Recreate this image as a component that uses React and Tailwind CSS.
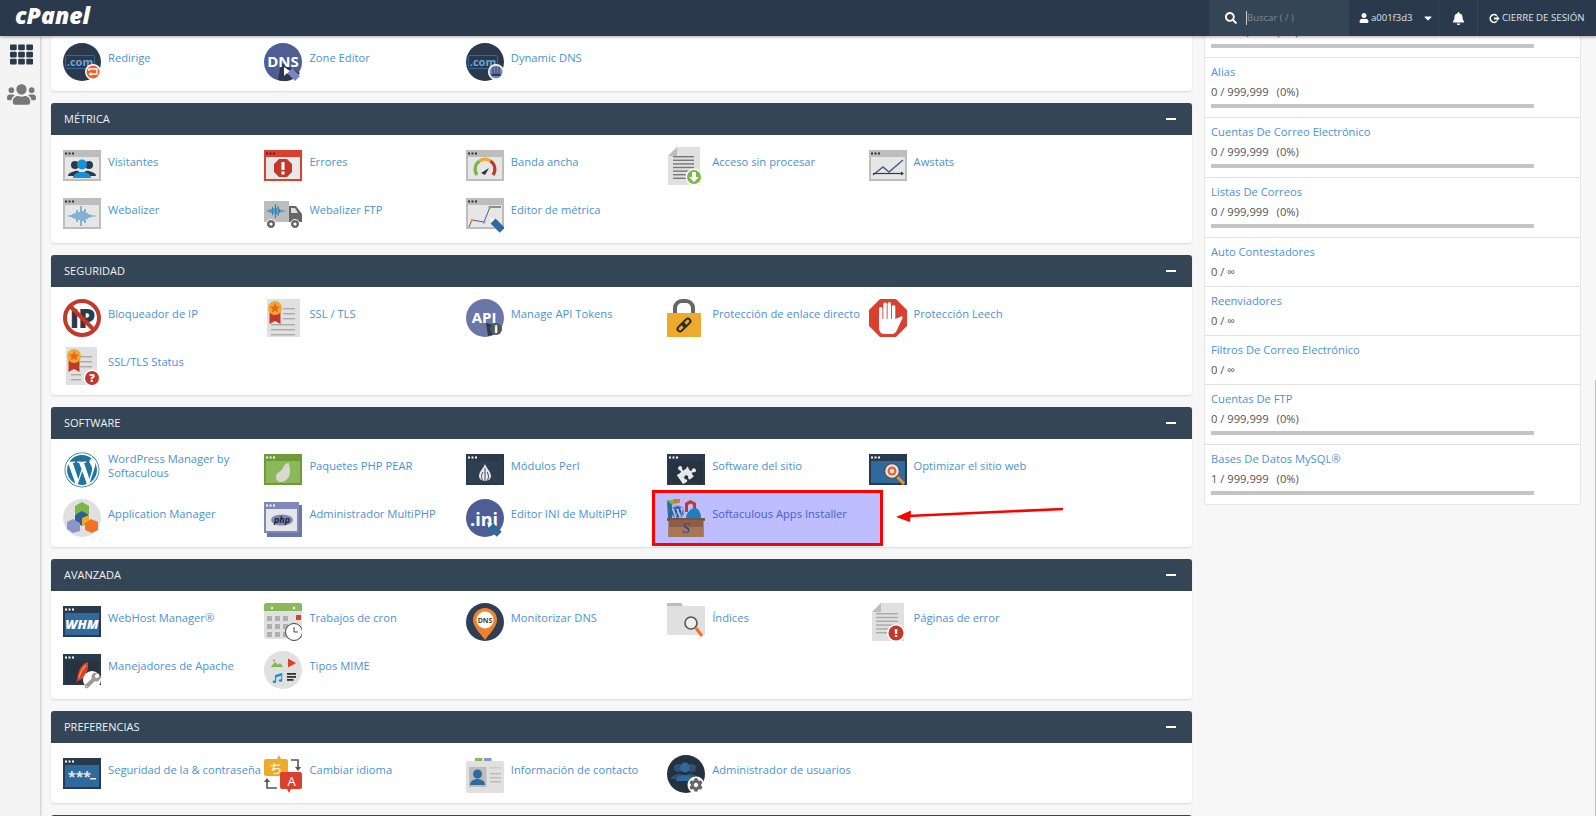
import {
  FaTh, FaUsers, FaSearch, FaUser, FaBell, FaCaretDown, FaWordpress, FaPuzzlePiece, FaCog, FaWrench, FaMusic,
} from 'react-icons/fa';

const NAVY = '#2a3a4c';
const BLUE = '#2f6a9e';

function Svg({ children }) {
  return (
    <svg viewBox="0 0 38 38" width="38" height="38" className="block shrink-0" fontFamily="'Open Sans', sans-serif">
      {children}
    </svg>
  );
}

// browser window frame used by most of the cPanel icons
function Win({ frame = '#bdbdbd', inner = '#e6e6e6', dots = '#333', children }) {
  return (
    <Svg>
      <rect y="3" width="38" height="31" fill={frame} />
      <rect x="2" y="10" width="34" height="22" fill={inner} />
      <rect x="2" y="5.5" width="2" height="2" fill={dots} />
      <rect x="5.5" y="5.5" width="2" height="2" fill={dots} />
      <rect x="9" y="5.5" width="2" height="2" fill={dots} />
      {children}
    </Svg>
  );
}

function Doc({ x = 3, w = 33, fold = false, children }) {
  const d = fold
    ? `M${x + 9} 0H${x + w}V38H${x}V9Z`
    : `M${x} 0H${x + w}V38H${x}Z`;
  return (
    <Svg>
      <path d={d} fill="#e0e0e0" />
      {fold && <path d={`M${x + 9} 0V9H${x}Z`} fill="#bdbdbd" />}
      {children}
    </Svg>
  );
}

function DotCom({ badge, children }) {
  return (
    <Svg>
      <circle cx="19" cy="19" r="19" fill={NAVY} />
      <rect x="2.5" y="12.5" width="29" height="13" rx="1" fill="none" stroke={BLUE} />
      <text x="17" y="23" textAnchor="middle" fontSize="11" fontWeight="700" fill="#6ea6d4">.com</text>
      <circle cx="30" cy="29" r="8" fill="#fff" />
      <circle cx="30" cy="29" r="6.5" fill={badge} />
      {children}
    </Svg>
  );
}

function Pencil({ x, y, color = '#7a86c0' }) {
  return (
    <g transform={`translate(${x} ${y}) rotate(-45)`}>
      <path d="M-2.5 -7L0 -11L2.5 -7Z" fill="#fff" />
      <rect x="-3.5" y="-7" width="7" height="13" fill={color} />
    </g>
  );
}

const Wave = ({ x = 0, y = 21, k = 1, color = '#1d7fc1' }) => (
  <g stroke={color} strokeWidth="1" transform={`translate(${x} ${y})`}>
    {[0.6, 1, 2, 3, 6, 4, 10, 5, 7, 3, 2, 1, 0.6, 0.5].map((h, i) => (
      <line key={i} x1={i * 2 * k} x2={i * 2 * k} y1={-h * k} y2={h * k} />
    ))}
  </g>
);

const Sheet = ({ x, y, w, n, gap = 4, color = '#999' }) => (
  <g fill={color}>
    {Array.from({ length: n }).map((_, i) => (
      <rect key={i} x={x} y={y + i * gap} width={w} height="1.4" />
    ))}
  </g>
);

const Ribbon = ({ x = 10, y = 9 }) => (
  <g>
    <path d={`M${x - 5.5} ${y}H${x + 5.5}V${y + 16}L${x} ${y + 13}L${x - 5.5} ${y + 16}Z`} fill="#c0392b" />
    <circle cx={x} cy={y} r="7" fill="#eeaa2d" />
    <path d={`M${x} ${y - 5}l1.5 3.4 3.6 .3-2.8 2.3 .9 3.6-3.2-2-3.2 2 .9-3.6-2.8-2.3 3.6-.3Z`} fill="#e8602c" />
  </g>
);

const People = ({ cx = 19, y = 13, color = '#1d8fd8', side = NAVY }) => (
  <g>
    <g fill={side}>
      <circle cx={cx - 7} cy={y + 4} r="4" />
      <path d={`M${cx - 14} ${y + 15}c0-3 4-4 7-5s7 2 7 5Z`} />
      <circle cx={cx + 7} cy={y + 4} r="4" />
      <path d={`M${cx} ${y + 15}c0-3 4-6 7-5s7 2 7 5Z`} />
    </g>
    <g fill={color}>
      <circle cx={cx} cy={y + 3.5} r="5" />
      <path d={`M${cx - 9} ${y + 17}c0-4 5-6 9-6s9 2 9 6Z`} />
    </g>
  </g>
);

const Badge = ({ cx = 29, cy = 30, r = 7, fill, mark }) => (
  <g>
    <circle cx={cx} cy={cy} r={r + 1.5} fill="#fff" />
    <circle cx={cx} cy={cy} r={r} fill={fill} />
    <text x={cx} y={cy + 4} textAnchor="middle" fontSize="11" fontWeight="800" fill="#fff">{mark}</text>
  </g>
);

const icons = {
  redirige: (
    <DotCom badge="#f1602a">
      <path d="M26 28v-2h8v5h-7" stroke="#fff" strokeWidth="1.4" fill="none" />
      <path d="M28.5 29l-3 2 3 2Z" fill="#fff" />
    </DotCom>
  ),
  zone: (
    <Svg>
      <circle cx="19" cy="19" r="19" fill="#4e5d94" />
      <path d="M17 20L36 30A19 19 0 0 1 14 37Z" fill={NAVY} />
      <text x="19" y="24" textAnchor="middle" fontSize="15" fontWeight="700" fill="#fff">DNS</text>
      <path d="M20 24l0 9 2.5-2.5 7-0Z" fill="#fff" />
      <g transform="translate(30 32) rotate(-45)">
        <rect x="-3.5" y="-6" width="7" height="11" fill="#7a86c0" />
      </g>
    </Svg>
  ),
  dyn: (
    <DotCom badge="#7a86c0">
      <path d="M27 24v6M30 24v6M33 24v6" stroke={NAVY} strokeWidth="1" />
      <rect x="25.5" y="30.5" width="9" height="2.4" fill={NAVY} />
    </DotCom>
  ),
  visitantes: <Win><People y={14} /></Win>,
  errores: (
    <Win frame="#d9402f" dots="#333" inner="#e8e8e8">
      <path d="M15 13h8l5 5v8l-5 5h-8l-5-5v-8Z" transform="translate(0 -1)" fill="#c0392b" />
      <rect x="17.5" y="15" width="3" height="8" fill="#fff" />
      <rect x="17.5" y="24.5" width="3" height="3" fill="#fff" />
    </Win>
  ),
  banda: (
    <Win>
      <path d="M11 28A10 10 0 0 1 13.5 14" fill="none" stroke="#7ab648" strokeWidth="3.2" />
      <path d="M13.5 14A10 10 0 0 1 24.5 14" fill="none" stroke="#eeaa2d" strokeWidth="3.2" />
      <path d="M24.5 14A10 10 0 0 1 27 28" fill="none" stroke="#c0392b" strokeWidth="3.2" />
      <path d="M15 26l8-5-4 7Z" fill="#333" />
    </Win>
  ),
  acceso: (
    <Doc x={1} w={32} fold>
      <Sheet x={6} y={9} w={21} n={7} color="#777" gap={3.6} />
      <circle cx="27" cy="30" r="8.5" fill="#fff" />
      <circle cx="27" cy="30" r="7" fill="#7ab648" />
      <path d="M25 25h4v5h3l-5 5-5-5h3Z" fill="#fff" />
    </Doc>
  ),
  awstats: (
    <Win>
      <path d="M4 28l10-8 6 5 14-12" fill="none" stroke="#4e5d94" strokeWidth="1.6" />
      <path d="M4 26.5H34" stroke={NAVY} strokeWidth="1.2" />
      <path d="M32 24.5l3 2-3 2Z" fill={NAVY} />
    </Win>
  ),
  webalizer: <Win><Wave x={6} y={21} /></Win>,
  webftp: (
    <Svg>
      <rect y="6" width="25" height="21" fill="#bdbdbd" />
      <path d="M25 11h7l6 8v8H25Z" fill="#666" />
      <path d="M27 13h4l3 5h-7Z" fill="#ddd" />
      <Wave x={3} y={16} k={0.7} />
      <circle cx="7" cy="29" r="4.5" fill="#666" stroke="#fff" />
      <circle cx="7" cy="29" r="1.6" fill="#fff" />
      <circle cx="31" cy="29" r="4.5" fill="#666" stroke="#fff" />
      <circle cx="31" cy="29" r="1.6" fill="#fff" />
    </Svg>
  ),
  editor: (
    <Win>
      <path d="M3 32L6 25L18 27L24 12" fill="none" stroke="#4e5d94" strokeWidth="1" />
      <path d="M25 12H35" stroke="#666" strokeWidth="1.4" />
      <circle cx="6" cy="25" r="1.6" fill="#eeaa2d" />
      <circle cx="18" cy="27" r="1.6" fill="#8d94c8" />
      <circle cx="24" cy="12" r="1.6" fill="#7ab648" />
      <Pencil x={32} y={31} color={BLUE} />
    </Win>
  ),
  ip: (
    <Svg>
      <circle cx="19" cy="19" r="17" fill="#fff" stroke="#c0392b" strokeWidth="4" />
      <text x="19" y="29" textAnchor="middle" fontSize="27" fontWeight="800" fill={NAVY} letterSpacing="-1">IP</text>
      <path d="M7 7L31 31" stroke="#c0392b" strokeWidth="4" />
    </Svg>
  ),
  ssl: (
    <Doc>
      <Sheet x={19} y={9} w={12} n={3} gap={5} color="#aaa" />
      <Sheet x={7} y={25} w={24} n={3} gap={5} color="#aaa" />
      <Ribbon x={11} y={9} />
    </Doc>
  ),
  sslstatus: (
    <Doc x={3} w={31}>
      <Sheet x={17} y={9} w={12} n={3} gap={5} color="#aaa" />
      <Sheet x={8} y={27} w={10} n={2} gap={5} color="#aaa" />
      <Ribbon x={11} y={9} />
      <Badge cx={29} cy={31} r={7} fill="#c0392b" mark="?" />
    </Doc>
  ),
  api: (
    <Svg>
      <circle cx="19" cy="19" r="19" fill="#6b76a8" />
      <path d="M20 24L36 28A19 19 0 0 1 22 37Z" fill={NAVY} />
      <text x="18" y="24" textAnchor="middle" fontSize="15" fontWeight="700" fill="#fff">API</text>
      <circle cx="30" cy="30" r="6" fill="#555" />
      <text x="30" y="34" textAnchor="middle" fontSize="11" fontWeight="800" fill="#fff">i</text>
    </Svg>
  ),
  lock: (
    <Svg>
      <path d="M8 16V9a7 7 0 0 1 7-7h4a7 7 0 0 1 7 7v7" fill="none" stroke="#666" strokeWidth="4" />
      <rect y="14" width="34" height="24" fill="#eeaa2d" />
      <g fill="none" stroke="#2b2b2b" strokeWidth="2" transform="rotate(-45 17 26)">
        <rect x="9" y="23.5" width="9" height="5" rx="2.5" />
        <rect x="16" y="23.5" width="9" height="5" rx="2.5" />
      </g>
    </Svg>
  ),
  leech: (
    <Svg>
      <path d="M11 0H27L38 11V27L27 38H11L0 27V11Z" fill="#d9402f" />
      <g fill="#fff">
        <rect x="10" y="8" width="3.4" height="18" rx="1.7" />
        <rect x="14.3" y="3.5" width="3.4" height="20" rx="1.7" />
        <rect x="18.6" y="3" width="3.4" height="20" rx="1.7" />
        <rect x="22.9" y="6" width="3.4" height="18" rx="1.7" />
        <path d="M10 20H26.3L32 17.5C33 17 34 18 33.5 19L28 31C27 33 25.5 35 23 35H15C12 35 10 32 10 29Z" />
      </g>
    </Svg>
  ),
  wp: (
    <div className="w-[38px] h-[38px] flex items-center justify-center text-[#21759b] shrink-0">
      <FaWordpress size={36} />
    </div>
  ),
  pear: (
    <Win frame="#6f9a3a" inner="#8ab85a" dots="#fff">
      <path d="M25 12c0 3 1 5 1 9 0 6-5 10-9 10-3 0-5-2-5-5 0-5 5-5 7-9 1-3 3-5 6-5Z" fill="#d8d8d0" />
    </Win>
  ),
  perl: (
    <Win frame="#2a3a4c" inner="#2f3f52" dots="#fff">
      <path d="M19 12c0 4-6 8-6 13 0 3 3 5 6 5s6-2 6-5c0-5-6-9-6-13Z" fill="#e8e8e8" />
      <path d="M19 17v13M17 21c-2 3-2 6 0 9M21 21c2 3 2 6 0 9" stroke={NAVY} strokeWidth="0.9" fill="none" />
    </Win>
  ),
  site: (
    <Win frame="#2a3a4c" inner="#263442" dots="#fff">
      <g transform="rotate(-35 19 21)">
        <FaPuzzlePiece size={19} x={9.5} y={11.5} color="#e8e8e8" />
      </g>
    </Win>
  ),
  opt: (
    <Win frame={NAVY} inner={BLUE} dots="#fff">
      <circle cx="23" cy="20" r="7.5" fill="#e8e8e8" stroke="#555" strokeWidth="1.5" />
      <circle cx="23" cy="20" r="3.4" fill="none" stroke="#f1602a" strokeWidth="2.2" />
      <path d="M28.5 26L35 33" stroke="#f1902a" strokeWidth="3" />
    </Win>
  ),
  appman: (
    <Svg>
      <circle cx="19" cy="19" r="19" fill="#e0e0e0" />
      <path d="M19 3l7 4v8l-7 4-7-4V7Z" fill="#7ab648" />
      <path d="M19 12l7 4v7l-7 4-7-4v-7Z" fill="#2f5f96" />
      <path d="M19 19l7-3v7l-7 4Z" fill="#eeaa2d" />
      <path d="M10 20l7 4v8l-7 2-6-4v-7Z" fill="#8d94c8" />
      <path d="M28 20l7 3v8l-6 3-7-3v-7Z" fill="#f1702a" />
    </Svg>
  ),
  multiphp: (
    <Svg>
      <rect x="3" y="6" width="35" height="32" fill="#6b76a8" />
      <rect width="35" height="31" y="3" fill="#8088bb" />
      <rect x="2" y="10" width="31" height="22" fill="#e6e6e6" />
      <rect x="2" y="5.5" width="2" height="2" fill="#fff" />
      <rect x="5.5" y="5.5" width="2" height="2" fill="#fff" />
      <rect x="9" y="5.5" width="2" height="2" fill="#fff" />
      <ellipse cx="18" cy="21" rx="11" ry="5.5" fill="#7a86c0" />
      <text x="18" y="24" textAnchor="middle" fontSize="9" fontStyle="italic" fontWeight="700" fill="#222">php</text>
    </Svg>
  ),
  ini: (
    <Svg>
      <circle cx="19" cy="19" r="19" fill="#4e5d94" />
      <text x="18" y="27" textAnchor="middle" fontSize="18" fontWeight="700" fill="#fff">.ini</text>
      <g transform="translate(29 31) rotate(-45)">
        <path d="M-3 -6L0 -11L3 -6Z" fill="#fff" />
        <rect x="-3.5" y="-6" width="7" height="12" fill={BLUE} />
      </g>
    </Svg>
  ),
  softaculous: (
    <Svg>
      <path d="M0 2l7-1 1 3-3 1v14H1Z" fill="#2f6a9e" />
      <path d="M0 1h9l2 3-6 2Z" fill="#7ab648" />
      <path d="M6 0h7v4H8Z" fill="#e8702c" />
      <path d="M18 4l5.5-3L29 4v9H18Z" fill="#c0392b" />
      <path d="M21 6l2.5-1.5L26 6v7h-5Z" fill="#bdbdff" />
      <path d="M19 19c0-6 6-10 9-10s6 4 6 10Z" fill="#1d7fc1" />
      <FaWordpress size={14} x={3.5} y={6} color="#21649b" />
      <path d="M0 19H38V22H36.5V38H1.5V22H0Z" fill="#8b5f47" />
      <rect x="1.5" y="28" width="35" height="10" fill="#a87556" />
      <rect y="19" width="38" height="2" fill="#7a5240" />
      <text x="19" y="34" textAnchor="middle" fontSize="15" fontStyle="italic" fill="#2a3f8f" fontFamily="'Liberation Serif', serif">S</text>
    </Svg>
  ),
  whm: (
    <Win frame={NAVY} inner={BLUE} dots="#fff">
      <text x="19" y="26" textAnchor="middle" fontSize="13" fontStyle="italic" fontWeight="800" fill="#fff">WHM</text>
    </Win>
  ),
  cron: (
    <Svg>
      <rect y="0" width="38" height="36" rx="2.5" fill="#e0e0e0" />
      <path d="M2.5 0H35.5A2.5 2.5 0 0 1 38 2.5V8H0V2.5A2.5 2.5 0 0 1 2.5 0Z" fill="#8ab85a" />
      <circle cx="8" cy="5" r="1.2" fill="#fff" />
      <circle cx="30" cy="5" r="1.2" fill="#fff" />
      <g fill="#b0b0b0">
        {[3, 11, 19].map((x) => [13, 21, 29].map((y) => <rect key={x + '-' + y} x={x} y={y} width="5" height="5" />))}
        <rect x="27" y="21" width="5" height="5" />
      </g>
      <rect x="32" y="12" width="5" height="5" fill="#d9402f" />
      <circle cx="30" cy="29" r="8.5" fill="#fff" stroke="#444" strokeWidth="1" />
      <path d="M30 24v5h4" fill="none" stroke="#444" strokeWidth="1" />
    </Svg>
  ),
  monitor: (
    <Svg>
      <circle cx="19" cy="19" r="19" fill="#2e3f57" />
      <path d="M19 5a12 12 0 0 1 12 12c0 7-8 14-12 20-4-6-12-13-12-20A12 12 0 0 1 19 5Z" fill="#f1822a" />
      <circle cx="19" cy="17" r="8.5" fill="#fff" />
      <text x="19" y="19.5" textAnchor="middle" fontSize="7" fontWeight="700" fill="#444">DNS</text>
    </Svg>
  ),
  indices: (
    <Svg>
      <path d="M0 0H14L16 3H38V32H0Z" fill="#e0e0e0" />
      <path d="M0 0H14L16 3H0Z" fill="#bdbdbd" />
      <circle cx="24" cy="20" r="6" fill="#eee" stroke="#555" strokeWidth="1.6" />
      <path d="M29 25L35 33" stroke="#f1702a" strokeWidth="3" />
    </Svg>
  ),
  errpage: (
    <Doc x={3} w={32} fold>
      <Sheet x={7} y={10} w={22} n={6} gap={3.8} color="#aaa" />
      <Badge cx={27} cy={30} r={7.5} fill="#c0392b" mark="!" />
    </Doc>
  ),
  apache: (
    <Win frame={NAVY} inner="#263442" dots="#fff">
      <path d="M25 11c-6 1-10 8-11 18l-1 3 2-2c7-2 11-10 10-19Z" fill="#d9402f" />
      <path d="M23 14c-3 3-6 8-7 13" stroke="#eeaa2d" strokeWidth="1.2" fill="none" />
      <circle cx="29" cy="29" r="9" fill="#fff" />
      <FaWrench size={16} x={21.5} y={21.5} color="#9a9a9a" />
    </Win>
  ),
  mime: (
    <Svg>
      <circle cx="19" cy="19" r="19" fill="#e0e0e0" />
      <path d="M7 16l4-5 3 3 2-2 3 4Z" fill="#7ab648" />
      <circle cx="10" cy="9.5" r="1" fill="#f1702a" />
      <path d="M24 7.5l8 4.5-8 4.5Z" fill="#d9402f" />
      <FaMusic size={10} x={8.5} y={22} color="#1d8fd8" />
      <rect x="23" y="22" width="9" height="1.8" fill="#333" />
      <rect x="23" y="25" width="9" height="1.8" fill="#333" />
      <rect x="23" y="28" width="6.5" height="1.8" fill="#333" />
    </Svg>
  ),
  pass: (
    <Win frame={NAVY} inner={BLUE} dots="#fff">
      <text x="5" y="27" fontSize="14" fontWeight="700" fill="#e8e8e8">***</text>
      <rect x="27" y="23" width="6" height="1.5" fill="#e8e8e8" />
    </Win>
  ),
  idioma: (
    <Svg>
      <path d="M2 4H13L15 0L17 4H22A2 2 0 0 1 24 6V19A2 2 0 0 1 22 21H2A2 2 0 0 1 0 19V6A2 2 0 0 1 2 4Z" fill="#eeaa2d" />
      <text x="12" y="17.5" textAnchor="middle" fontSize="13" fill="#fff" fontFamily="'Noto Sans CJK JP', sans-serif">ち</text>
      <path d="M18 17H36A2 2 0 0 1 38 19V32A2 2 0 0 1 36 34H27L25 38L23 34H18A2 2 0 0 1 16 32V19A2 2 0 0 1 18 17Z" fill="#d9402f" />
      <text x="27.5" y="31" textAnchor="middle" fontSize="13" fill="#fff">A</text>
      <path d="M27 5H34V13" fill="none" stroke="#555" strokeWidth="1.6" />
      <path d="M31 12h6l-3 4Z" fill="#555" />
      <path d="M13 33H3V26" fill="none" stroke="#555" strokeWidth="1.6" />
      <path d="M0 27h6l-3-4Z" fill="#555" />
    </Svg>
  ),
  contact: (
    <Svg>
      <rect x="9" y="3" width="7.5" height="5" fill="#8ab85a" />
      <rect x="18" y="3" width="7.5" height="5" fill="#8d94c8" />
      <rect y="6" width="38" height="32" rx="2" fill="#e0e0e0" />
      <rect x="3" y="12" width="17.5" height="20" fill="#bdbdbd" />
      <circle cx="11.5" cy="19" r="4.5" fill={BLUE} />
      <path d="M4 30c0-4 4-6 7.5-6s7.5 2 7.5 6Z" fill={BLUE} />
      <Sheet x={24} y={18} w={11} n={3} gap={4} color="#bbb" />
      <rect x="23" y="12" width="12" height="1.4" fill="#ccc" />
    </Svg>
  ),
  admin: (
    <Svg>
      <circle cx="19" cy="19" r="19" fill="#243240" />
      <People cx={18} y={9} color={BLUE} side="#36506e" />
      <circle cx="29" cy="30" r="8.5" fill="#fff" />
      <FaCog size={14} x={22} y={23} color="#666" />
    </Svg>
  ),
};

const Panels = [
  {
    title: 'MÉTRICA',
    items: [
      ['visitantes', 'Visitantes'], ['errores', 'Errores'], ['banda', 'Banda ancha'], ['acceso', 'Acceso sin procesar'], ['awstats', 'Awstats'],
      ['webalizer', 'Webalizer'], ['webftp', 'Webalizer FTP'], ['editor', 'Editor de métrica'],
    ],
  },
  {
    title: 'SEGURIDAD',
    items: [
      ['ip', 'Bloqueador de IP'], ['ssl', 'SSL / TLS'], ['api', 'Manage API Tokens'], ['lock', 'Protección de enlace directo'], ['leech', 'Protección Leech'],
      ['sslstatus', 'SSL/TLS Status'],
    ],
  },
  {
    title: 'SOFTWARE',
    items: [
      ['wp', 'WordPress Manager by Softaculous'], ['pear', 'Paquetes PHP PEAR'], ['perl', 'Módulos Perl'], ['site', 'Software del sitio'], ['opt', 'Optimizar el sitio web'],
      ['appman', 'Application Manager'], ['multiphp', 'Administrador MultiPHP'], ['ini', 'Editor INI de MultiPHP'], ['softaculous', 'Softaculous Apps Installer', true],
    ],
  },
  {
    title: 'AVANZADA',
    items: [
      ['whm', 'WebHost Manager®'], ['cron', 'Trabajos de cron'], ['monitor', 'Monitorizar DNS'], ['indices', 'Índices'], ['errpage', 'Páginas de error'],
      ['apache', 'Manejadores de Apache'], ['mime', 'Tipos MIME'],
    ],
  },
  {
    title: 'PREFERENCIAS',
    items: [
      ['pass', 'Seguridad de la & contraseña'], ['idioma', 'Cambiar idioma'], ['contact', 'Información de contacto'], ['admin', 'Administrador de usuarios'],
    ],
  },
];

// first row is scrolled under the top bar, only its value and bar show
const stats = [
  ['', '0 / 999,999', '(0%)'],
  ['Alias', '0 / 999,999', '(0%)'],
  ['Cuentas De Correo Electrónico', '0 / 999,999', '(0%)'],
  ['Listas De Correos', '0 / 999,999', '(0%)'],
  ['Auto Contestadores', '0 / ∞'],
  ['Reenviadores', '0 / ∞'],
  ['Filtros De Correo Electrónico', '0 / ∞'],
  ['Cuentas De FTP', '0 / 999,999', '(0%)'],
  ['Bases De Datos MySQL®', '1 / 999,999', '(0%)'],
];

function Item({ icon, label, selected }) {
  return (
    <div className="relative flex h-[38px] mb-[10px]">
      {selected && (
        <div className="absolute -left-[15px] -top-[9px] w-[231px] h-[56px] border-[3px] border-[#ff0000] bg-[#bdbdff]" />
      )}
      <div className="relative flex">
        {icons[icon]}
        <div className="ml-[7px] h-[30px] flex items-center">
          <span className={`w-[154px] text-[11.2px] leading-[14px] ${selected ? 'text-[#4561cc]' : 'text-[#4a92d6]'}`}>{label}</span>
        </div>
      </div>
    </div>
  );
}

function Panel({ title, items }) {
  return (
    <section className="mb-3 rounded-[3px] bg-white shadow-[0_1px_2px_rgba(0,0,0,0.12)]">
      <div className="h-8 flex items-center justify-between pl-[13px] pr-4 bg-[#344556] rounded-t-[3px] text-[#f2f2f2] text-[11px]">
        <span>{title}</span>
        <span className="block w-[10px] h-[2px] bg-white" />
      </div>
      <div className="grid grid-cols-[repeat(5,201.4px)] pl-3 pt-3">
        {items.map(([icon, label, selected]) => (
          <Item key={label} icon={icon} label={label} selected={selected} />
        ))}
      </div>
    </section>
  );
}

export default function App() {
  return (
    <div className="relative h-screen w-full overflow-hidden bg-[#f7f7f7] font-['Open_Sans',sans-serif] text-[11.2px]">
      {/* Top bar */}
      <header className="relative z-10 h-9 flex bg-[#2a3a4c] text-white shadow-[0_1px_3px_rgba(0,0,0,0.35)]">
        <div className="pl-[15px] text-[23px] leading-[30px] font-extrabold italic">cPanel</div>
        <div className="ml-auto flex h-full">
          <div className="w-[140px] flex items-center bg-[#344556] pl-4">
            <FaSearch className="text-[12px] text-white" />
            <span className="ml-[9px] border-l border-[#c8c8c8] text-[#7f8b98] text-[9.5px] leading-[14px]">Buscar ( / )</span>
          </div>
          <div className="w-[90px] flex items-center pl-[10px] border-r border-[#344556] text-[#dfe3e7] text-[9.5px]">
            <FaUser className="text-[10px] text-white" />
            <span className="ml-[2px]">a001f3d3</span>
            <FaCaretDown className="ml-[10px] text-[12px] text-white" />
          </div>
          <div className="w-[39px] flex items-center justify-center border-r border-[#344556]">
            <FaBell className="text-[13px] text-white" />
          </div>
          <div className="w-[118px] flex items-center pl-[11px] text-[#dfe3e7] text-[9.7px]">
            <svg viewBox="0 0 12 12" width="11" height="11" className="shrink-0">
              <path d="M8.5 3A4.2 4.2 0 1 0 8.5 9" fill="none" stroke="#fff" strokeWidth="1.8" />
              <path d="M5.5 5h3V3l3 3-3 3V7h-3Z" fill="#fff" />
            </svg>
            <span className="ml-[2px] whitespace-nowrap">CIERRE DE SESIÓN</span>
          </div>
        </div>
      </header>

      <div className="flex h-[780px]">
        {/* Side nav */}
        <aside className="w-10 shrink-0 bg-[#f4f4f4] shadow-[1px_0_2px_rgba(0,0,0,0.2)] flex flex-col items-center pt-[7px] pl-[3px]">
          <FaTh className="text-[23px] text-[#2a3a4c]" />
          <FaUsers className="mt-[14px] text-[29px] text-[#777]" />
        </aside>

        {/* Tool panels */}
        <main className="w-[1141px] ml-[11px] shrink-0">
          <section className="mb-3 h-[55px] rounded-b-[3px] bg-white shadow-[0_1px_2px_rgba(0,0,0,0.12)] pt-[7px] pl-3 grid grid-cols-[repeat(5,201.4px)]">
            <Item icon="redirige" label="Redirige" />
            <Item icon="zone" label="Zone Editor" />
            <Item icon="dyn" label="Dynamic DNS" />
          </section>
          {Panels.map((p) => (
            <Panel key={p.title} title={p.title} items={p.items} />
          ))}
          <div className="h-8 bg-[#344556] rounded-t-[3px]" />
        </main>

        {/* Stats column */}
        <aside className="w-[377px] ml-3 shrink-0 -mt-[38px] self-start rounded-[3px] bg-white border-x border-b border-[#e6e6e6]">
          {stats.map(([name, value, pct], i) => (
            <div key={i} className="border-t border-[#e2e2e2] px-[6px] pt-[6px] pb-[6px] first:border-t-0">
              <div className="h-4 leading-4 text-[#4a92d6]">{name}</div>
              <div className="h-4 leading-4 mt-1 text-[#555]">
                {value}
                {pct && <span className="ml-[8px]">{pct}</span>}
              </div>
              {pct && <div className="mt-1 mb-[3px] h-1 w-[323px] bg-[#c4c4c4]" />}
            </div>
          ))}
        </aside>
      </div>

      {/* Red arrow annotation */}
      <svg className="absolute left-[890px] top-[500px]" width="180" height="24" viewBox="0 0 180 24">
        <path d="M173 9L18 16" stroke="#f00" strokeWidth="2.6" />
        <path d="M6 17L21 10.5L20 22Z" fill="#f00" />
      </svg>

      {/* sliver of the browser scrollbar at the window edge */}
      <div className="absolute right-0 top-[380px] bottom-0 w-px bg-[#bdbdbd]" />
    </div>
  );
}
